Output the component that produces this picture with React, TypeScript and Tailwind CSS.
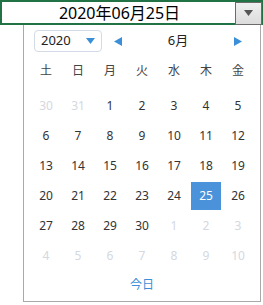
const font = { fontFamily: '"Noto Sans", "Noto Sans CJK JP", sans-serif' };

const weekdays = ["土", "日", "月", "火", "水", "木", "金"];

type Day = { d: number; out?: boolean; sel?: boolean };

const days: Day[] = [
  { d: 30, out: true },
  { d: 31, out: true },
  ...Array.from({ length: 30 }, (_, i) => ({ d: i + 1, sel: i + 1 === 25 })),
  ...Array.from({ length: 10 }, (_, i) => ({ d: i + 1, out: true })),
];

export default function App() {
  return (
    <div className="w-[263px] h-[305px] bg-white text-[#333]" style={font}>
      {/* input */}
      <div className="h-[25px] border-2 border-[#217346] flex items-center">
        <div className="flex-1 text-center text-[16px] leading-none text-black pl-[2px]">2020年06月25日</div>
        <div className="w-[27px] h-[23px] mr-[-1px] mt-[1px] border border-[#6b6b6b] bg-gradient-to-b from-[#f0f0f0] to-[#dcdcdc] flex items-center justify-center">
          <svg width="9" height="6" viewBox="0 0 9 6">
            <path d="M0 0h9L4.5 6z" fill="#555" />
          </svg>
        </div>
      </div>

      {/* popup */}
      <div className="ml-[23px] w-[238px] h-[277px] border border-t-0 border-[#a9a9a9] bg-white flex flex-col">
        <div className="flex items-center mt-[5px] ml-[10px] h-[22px]">
          <div className="w-[68px] h-[22px] border border-[#d3dbe6] rounded-[4px] flex items-center px-[6px] text-[13px] text-[#222]">
            <span className="flex-1">2020</span>
            <svg width="9" height="6" viewBox="0 0 9 6">
              <path d="M0 0h9L4.5 6z" fill="#3b8fd9" />
            </svg>
          </div>
          <div className="flex items-center ml-[12px] w-[128px]">
            <svg width="8" height="9" viewBox="0 0 8 9">
              <path d="M8 0v9L0 4.5z" fill="#3b8fd9" />
            </svg>
            <span className="flex-1 text-center text-[13px] text-[#222]">6月</span>
            <svg width="8" height="9" viewBox="0 0 8 9">
              <path d="M0 0v9l8-4.5z" fill="#3b8fd9" />
            </svg>
          </div>
        </div>

        <div className="grid grid-cols-7 px-[6px] mt-[4px]">
          {weekdays.map((w) => (
            <div key={w} className="h-[30px] flex items-center justify-center text-[12px] text-[#444]">
              {w}
            </div>
          ))}
        </div>

        <div className="grid grid-cols-7 px-[6px] mt-[5px]">
          {days.map((x, i) => (
            <div key={i} className="h-[30px] flex items-center justify-center">
              <div
                className={
                  "w-[30px] h-[28px] flex items-center justify-center text-[12px] " +
                  (x.sel ? "bg-[#4a92da] text-white" : x.out ? "text-[#d4d8e0]" : "text-[#333]")
                }
              >
                {x.d}
              </div>
            </div>
          ))}
        </div>

        <div className="flex-1 flex items-center justify-center text-[12px] text-[#3b8fd9] pb-[2px]">今日</div>
      </div>
    </div>
  );
}
